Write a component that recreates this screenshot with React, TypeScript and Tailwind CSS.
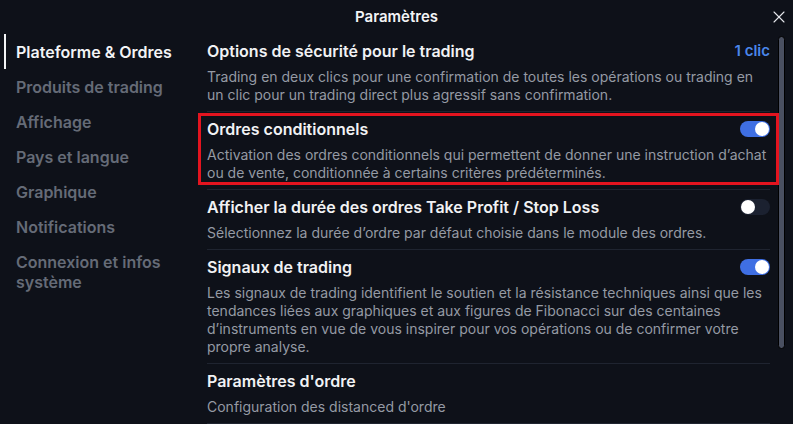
import { X } from "lucide-react";

const menu = [
  "Plateforme & Ordres",
  "Produits de trading",
  "Affichage",
  "Pays et langue",
  "Graphique",
  "Notifications",
  "Connexion et infos système",
];

type Setting = {
  title: string;
  desc: string;
  right?: "clic" | "on" | "off";
  highlight?: boolean;
};

const settings: Setting[] = [
  {
    title: "Options de sécurité pour le trading",
    desc: "Trading en deux clics pour une confirmation de toutes les opérations ou trading en un clic pour un trading direct plus agressif sans confirmation.",
    right: "clic",
  },
  {
    title: "Ordres conditionnels",
    desc: "Activation des ordres conditionnels qui permettent de donner une instruction d’achat ou de vente, conditionnée à certains critères prédéterminés.",
    right: "on",
    highlight: true,
  },
  {
    title: "Afficher la durée des ordres Take Profit / Stop Loss",
    desc: "Sélectionnez la durée d’ordre par défaut choisie dans le module des ordres.",
    right: "off",
  },
  {
    title: "Signaux de trading",
    desc: "Les signaux de trading identifient le soutien et la résistance techniques ainsi que les tendances liées aux graphiques et aux figures de Fibonacci sur des centaines d’instruments en vue de vous inspirer pour vos opérations ou de confirmer votre propre analyse.",
    right: "on",
  },
  {
    title: "Paramètres d'ordre",
    desc: "Configuration des distanced d'ordre",
  },
];

function Toggle({ on }: { on: boolean }) {
  return (
    <div
      className={`w-[30px] h-[16px] rounded-full flex items-center px-[1px] ${
        on ? "bg-[#3f6fe3] justify-end" : "bg-[#1b2130] justify-start"
      }`}
    >
      <div className="w-[14px] h-[14px] rounded-full bg-white" />
    </div>
  );
}

export default function App() {
  return (
    <div
      className="w-[793px] h-[424px] bg-[#0e1119] text-white overflow-hidden flex flex-col"
      style={{ fontFamily: "Inter, 'Noto Sans', sans-serif" }}
    >
      <div className="h-[34px] shrink-0 relative flex items-center justify-center">
        <span className="text-[15px] font-semibold text-[#f3f4f6] leading-none -mt-[2px]">Paramètres</span>
        <X className="absolute right-[4px] top-[7px] w-[20px] h-[20px] text-[#e5e7eb]" strokeWidth={1.3} />
      </div>
      <div className="flex flex-1 min-h-0">
        <div className="w-[198px] shrink-0 pl-[4px]">
          {menu.map((m, i) => (
            <div
              key={m}
              className={`pl-[10px] pr-2 py-[7.5px] text-[16px] leading-[20px] font-semibold border-l-2 ${
                i === 0 ? "border-[#f3f4f6] text-[#f3f4f6]" : "border-transparent text-[#656b77]"
              }`}
            >
              {m}
            </div>
          ))}
        </div>
        <div className="w-[580px] shrink-0">
          {settings.map((s) => (
            <div key={s.title} className="relative pl-[9px] pr-[8px]">
              {s.highlight && (
                <div className="absolute left-0 right-[-1px] top-[1px] bottom-[5px] border-[3px] border-[#e3141f] pointer-events-none" />
              )}
              <div className="pt-[7px] pb-[7px] border-b border-[#1f2430]">
                <div className="flex items-center justify-between h-[20px]">
                  <span className="text-[16px] leading-[20px] font-semibold text-[#f1f2f4]">{s.title}</span>
                  {s.right === "clic" && (
                    <span className="text-[15px] font-semibold text-[#4a86ea]">1 clic</span>
                  )}
                  {s.right === "on" && <Toggle on />}
                  {s.right === "off" && <Toggle on={false} />}
                </div>
                <p className="mt-[7px] text-[14px] leading-[18px] text-[#959aa4] -mr-[3px]">{s.desc}</p>
              </div>
            </div>
          ))}
        </div>
        <div className="w-[15px] shrink-0 pt-[2px]">
          <div className="w-[7px] h-[313px] rounded-full bg-[#4a5061] border border-black" />
        </div>
      </div>
    </div>
  );
}
